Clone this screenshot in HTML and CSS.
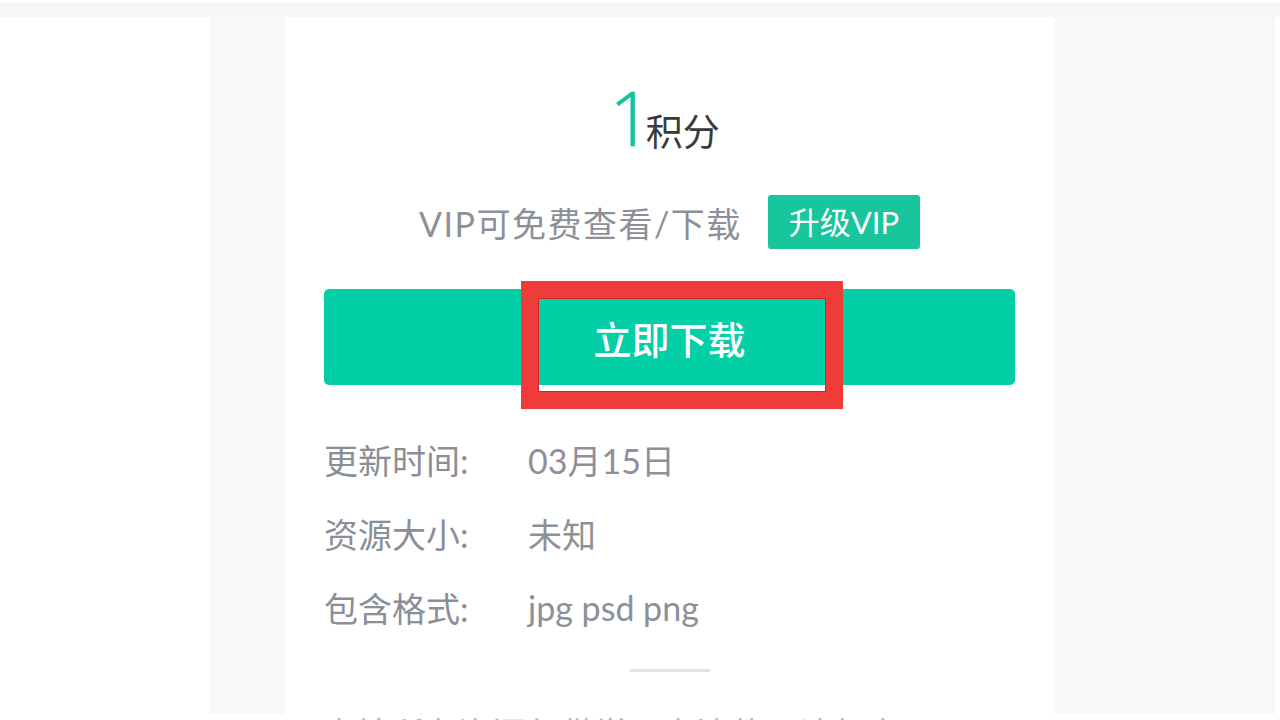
FILE: index.html
```html
<!DOCTYPE html>
<html lang="zh-CN">
<head>
<meta charset="utf-8">
<title>立即下载</title>
<link rel="stylesheet" href="styles.css">
</head>
<body>
<div class="page">
  <div class="topband"></div>
  <div class="main">
    <div class="leftpad"></div>
    <div class="gutter"></div>
    <div class="card">
      <div class="score">
        <span class="score-num">1</span>
        <span class="score-unit">积分</span>
      </div>
      <div class="vip-line">
        <span class="vip-text">VIP可免费查看/下载</span>
        <span class="vip-badge">升级VIP</span>
      </div>
      <div class="download-btn">立即下载</div>
      <div class="info">
        <div class="info-row"><span class="info-label">更新时间:</span><span class="info-value">03月15日</span></div>
        <div class="info-row"><span class="info-label">资源大小:</span><span class="info-value">未知</span></div>
        <div class="info-row"><span class="info-label">包含格式:</span><span class="info-value">jpg psd png</span></div>
      </div>
      <div class="divider"></div>
      <div class="highlight"></div>
    </div>
    <div class="rightcol"></div>
    <div class="edge"></div>
  </div>
  <div class="bottomstrip">本站所有资源仅供学习交流使用请勿商用</div>
</div>
</body>
</html>
```

FILE: styles.css
```css
html, body {
  margin: 0;
  padding: 0;
  background: #ffffff;
}

body {
  width: 1280px;
  height: 720px;
  overflow: hidden;
  font-family: Lato, "Noto Sans CJK SC", sans-serif;
}

.page {
  padding-top: 3px;
  height: 717px;
  display: flex;
  flex-direction: column;
  overflow: hidden;
}

.topband {
  height: 14px;
  background: #f7f7f7;
  flex: none;
}

.main {
  display: flex;
  height: 697px;
  flex: none;
}

.leftpad {
  width: 210px;
  background: #ffffff;
}

.gutter {
  width: 75px;
  background: #f8f8f8;
}

.card {
  width: 770px;
  background: #ffffff;
  position: relative;
  padding: 0 40px 0 39px;
  box-sizing: border-box;
  display: flex;
  flex-direction: column;
}

.rightcol {
  width: 220px;
  background: #f8f8f8;
}

.edge {
  width: 5px;
  background: #ffffff;
}

.score {
  margin-top: 58px;
  padding-right: 10px;
  display: flex;
  justify-content: center;
  align-items: baseline;
  height: 84px;
  line-height: 84px;
}

.score-num {
  font-family: "Open Sans", sans-serif;
  font-weight: 300;
  font-size: 76px;
  color: #14c39e;
  margin-right: -7px;
  -webkit-text-stroke: 0.6px #14c39e;
}

.score-unit {
  font-family: "Noto Sans CJK SC", sans-serif;
  font-size: 37px;
  color: #3a3a3a;
}

.vip-line {
  margin-top: 36px;
  display: flex;
  justify-content: center;
  align-items: center;
  gap: 26px;
  height: 54px;
}

.vip-text {
  font-size: 34px;
  color: #8d9099;
  letter-spacing: 1.5px;
}

.vip-badge {
  height: 54px;
  line-height: 54px;
  padding: 0 21px;
  background: #19c59c;
  border-radius: 3px;
  color: #ffffff;
  font-size: 31px;
}

.download-btn {
  margin-top: 40px;
  height: 96px;
  background: #02cfa6;
  border-radius: 5px;
  color: #ffffff;
  font-family: "Noto Sans CJK SC", sans-serif;
  font-weight: 500;
  font-size: 38px;
  display: flex;
  align-items: center;
  justify-content: center;
}

.info {
  margin-top: 37px;
  display: flex;
  flex-direction: column;
}

.info-row {
  height: 74px;
  display: flex;
  align-items: center;
  font-size: 34px;
  color: #8a8e97;
}

.info-label {
  width: 204px;
  flex: none;
}

.info-value {
  color: #8d9099;
}

.divider {
  margin-top: 25px;
  align-self: center;
  width: 80px;
  height: 3px;
  background: #e4e4e4;
}

.highlight {
  position: absolute;
  left: 236px;
  top: 264px;
  width: 322px;
  height: 128px;
  box-sizing: border-box;
  border: 17px solid #f03b3b;
  box-shadow: inset 0 0 0 1px #c82a2a;
}

.bottomstrip {
  padding-left: 322px;
  padding-top: 2px;
  height: 40px;
  line-height: 34px;
  font-size: 34px;
  color: #b4b7bc;
  font-family: "Noto Sans CJK SC", sans-serif;
  white-space: nowrap;
  flex: none;
}
```
